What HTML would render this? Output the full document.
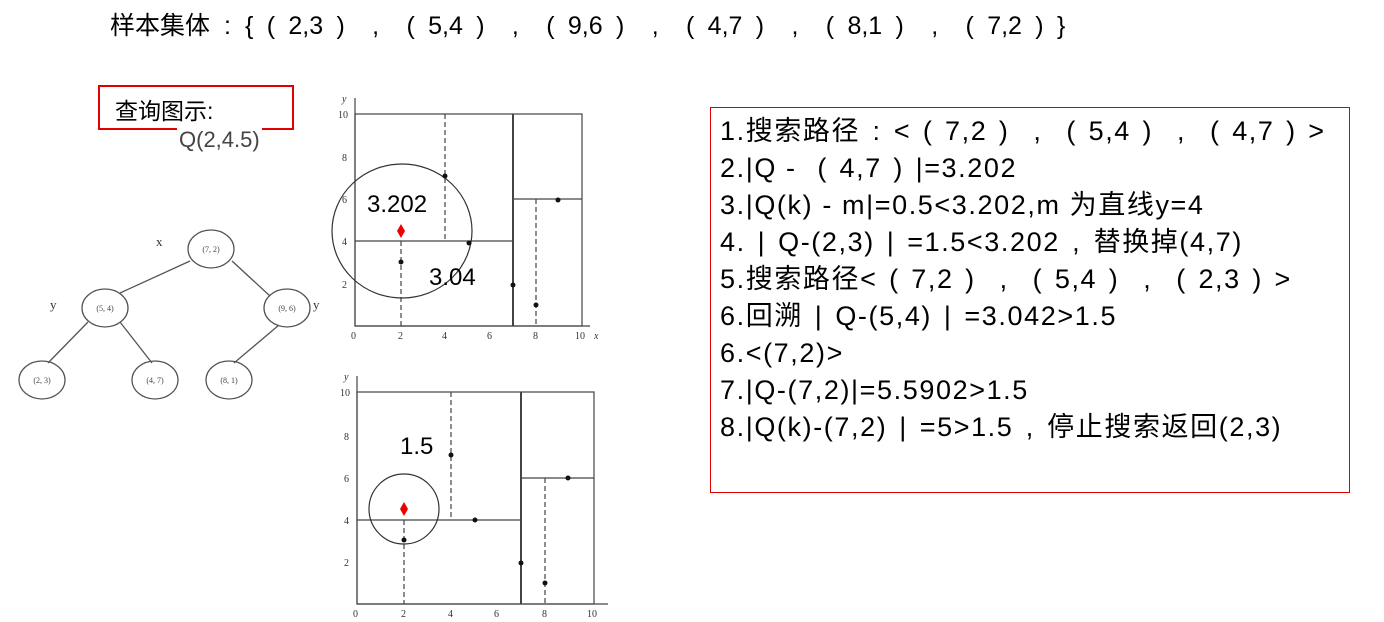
<!DOCTYPE html>
<html><head><meta charset="utf-8"><style>
body{margin:0;width:1384px;height:622px;background:#fff;position:relative;overflow:hidden;font-family:"Liberation Sans","Noto Sans CJK SC",sans-serif;}
.t{position:absolute;white-space:nowrap;color:#000}
.o,.c,.m,.b{display:inline-block;text-align:center}
.tt .o,.tt .c,.tt .m{width:1.4em}
.pn .o,.pn .c,.pn .m{width:1.25em}
.pn .b{width:1.2em}
</style></head><body>
<div class="t tt" style="left:110px;top:6px;font-size:25px;">样本集体<span class="m">:</span>{<span class="o">(</span>2,3<span class="c">)</span><span class="m">,</span><span class="o">(</span>5,4<span class="c">)</span><span class="m">,</span><span class="o">(</span>9,6<span class="c">)</span><span class="m">,</span><span class="o">(</span>4,7<span class="c">)</span><span class="m">,</span><span class="o">(</span>8,1<span class="c">)</span><span class="m">,</span><span class="o">(</span>7,2<span class="c">)</span>}</div>
<div style="position:absolute;left:98px;top:85px;width:192px;height:41px;border:2px solid #e00000;"></div>
<div class="t" style="left:115px;top:92px;font-size:23px;">查询图示:</div>
<div class="t" style="left:177px;top:127px;font-size:22px;color:#444;background:#fff;padding:0 2px;">Q(2,4.5)</div>

<svg width="1384" height="622" style="position:absolute;left:0;top:0" font-family="Liberation Serif,serif">
<g stroke="#555" stroke-width="1.3" fill="none">
<line x1="190" y1="261" x2="120" y2="293"/><line x1="232" y1="261" x2="270" y2="296"/>
<line x1="88" y1="322" x2="48" y2="363"/><line x1="120" y1="322" x2="152" y2="363"/>
<line x1="279" y1="325" x2="234" y2="363"/>
<ellipse cx="211" cy="249" rx="23" ry="19"/><ellipse cx="105" cy="308" rx="23" ry="19"/>
<ellipse cx="287" cy="308" rx="23" ry="19"/><ellipse cx="42" cy="380" rx="23" ry="19"/>
<ellipse cx="155" cy="380" rx="23" ry="19"/><ellipse cx="229" cy="380" rx="23" ry="19"/>
</g>
<g font-size="8" fill="#444" text-anchor="middle">
<text x="211" y="252">(7, 2)</text><text x="105" y="311">(5, 4)</text><text x="287" y="311">(9, 6)</text>
<text x="42" y="383">(2, 3)</text><text x="155" y="383">(4, 7)</text><text x="229" y="383">(8, 1)</text>
</g>
<g font-size="13" fill="#333"><text x="156" y="246">x</text><text x="50" y="309">y</text><text x="313" y="309">y</text></g>

<!-- chart 1 -->
<g stroke="#444" stroke-width="1.2" fill="none">
<line x1="355" y1="326" x2="590" y2="326"/><line x1="355" y1="326" x2="355" y2="98"/>
<rect x="355" y="114" width="227" height="212"/>
<line x1="513" y1="114" x2="513" y2="326" stroke-width="2"/>
<line x1="355" y1="241" x2="513" y2="241"/>
<line x1="513" y1="199" x2="582" y2="199"/>
<g stroke-dasharray="5,3"><line x1="445" y1="114" x2="445" y2="241"/><line x1="401" y1="241" x2="401" y2="326"/><line x1="536" y1="199" x2="536" y2="326"/></g>
<ellipse cx="402" cy="231" rx="70" ry="67" stroke="#333"/>
</g>
<g fill="#111"><circle cx="445" cy="176" r="2.5"/><circle cx="469" cy="243" r="2.5"/><circle cx="401" cy="262" r="2.5"/><circle cx="513" cy="285" r="2.5"/><circle cx="536" cy="305" r="2.5"/><circle cx="558" cy="200" r="2.5"/></g>
<path d="M401 224 L405 231 L401 238 L397 231Z" fill="#e00"/>
<g font-size="10" fill="#333"><text x="338" y="118">10</text><text x="342" y="161">8</text><text x="342" y="203">6</text><text x="342" y="245">4</text><text x="342" y="288">2</text>
<text x="351" y="339">0</text><text x="398" y="339">2</text><text x="442" y="339">4</text><text x="487" y="339">6</text><text x="533" y="339">8</text><text x="575" y="339">10</text><text x="594" y="339" font-style="italic">x</text><text x="342" y="102" font-style="italic">y</text></g>
<g font-family="Liberation Sans,sans-serif" font-size="24" fill="#000"><text x="367" y="212">3.202</text><text x="429" y="285">3.04</text></g>

<!-- chart 2 -->
<g stroke="#444" stroke-width="1.2" fill="none">
<line x1="357" y1="604" x2="608" y2="604"/><line x1="357" y1="604" x2="357" y2="376"/>
<rect x="357" y="392" width="237" height="212"/>
<line x1="521" y1="392" x2="521" y2="604" stroke-width="2"/>
<line x1="357" y1="520" x2="521" y2="520"/>
<line x1="521" y1="478" x2="594" y2="478"/>
<g stroke-dasharray="5,3"><line x1="451" y1="392" x2="451" y2="520"/><line x1="404" y1="520" x2="404" y2="604"/><line x1="545" y1="478" x2="545" y2="604"/></g>
<circle cx="404" cy="509" r="35" stroke="#333"/>
</g>
<g fill="#111"><circle cx="451" cy="455" r="2.5"/><circle cx="475" cy="520" r="2.5"/><circle cx="404" cy="540" r="2.5"/><circle cx="521" cy="563" r="2.5"/><circle cx="545" cy="583" r="2.5"/><circle cx="568" cy="478" r="2.5"/></g>
<path d="M404 502 L408 509 L404 516 L400 509Z" fill="#e00"/>
<g font-size="10" fill="#333"><text x="340" y="396">10</text><text x="344" y="440">8</text><text x="344" y="482">6</text><text x="344" y="524">4</text><text x="344" y="566">2</text>
<text x="353" y="617">0</text><text x="401" y="617">2</text><text x="448" y="617">4</text><text x="494" y="617">6</text><text x="542" y="617">8</text><text x="587" y="617">10</text><text x="344" y="380" font-style="italic">y</text></g>
<text x="400" y="454" font-family="Liberation Sans,sans-serif" font-size="24" fill="#000">1.5</text>
</svg>

<div style="position:absolute;left:710px;top:107px;width:638px;height:384px;border:1.5px solid #e00000;"></div>
<div class="t pn" style="left:720px;top:113px;font-size:27px;line-height:37px;letter-spacing:1.6px;">
1.搜索路径<span class="m">:</span>&lt;<span class="o">(</span>7,2<span class="c">)</span><span class="m">,</span><span class="o">(</span>5,4<span class="c">)</span><span class="m">,</span><span class="o">(</span>4,7<span class="c">)</span>&gt;<br>
2.|Q - <span class="o">(</span>4,7<span class="c">)</span>|=3.202<br>
3.|Q(k) - m|=0.5&lt;3.202,m 为直线y=4<br>
4.<span class="b">|</span>Q-(2,3)<span class="b">|</span>=1.5&lt;3.202<span class="m">,</span>替换掉(4,7)<br>
5.搜索路径&lt;<span class="o">(</span>7,2<span class="c">)</span><span class="m">,</span><span class="o">(</span>5,4<span class="c">)</span><span class="m">,</span><span class="o">(</span>2,3<span class="c">)</span>&gt;<br>
6.回溯<span class="b">|</span>Q-(5,4)<span class="b">|</span>=3.042&gt;1.5<br>
6.&lt;(7,2)&gt;<br>
7.|Q-(7,2)|=5.5902&gt;1.5<br>
8.|Q(k)-(7,2)<span class="b">|</span>=5&gt;1.5<span class="m">,</span>停止搜索返回(2,3)
</div>
</body></html>
